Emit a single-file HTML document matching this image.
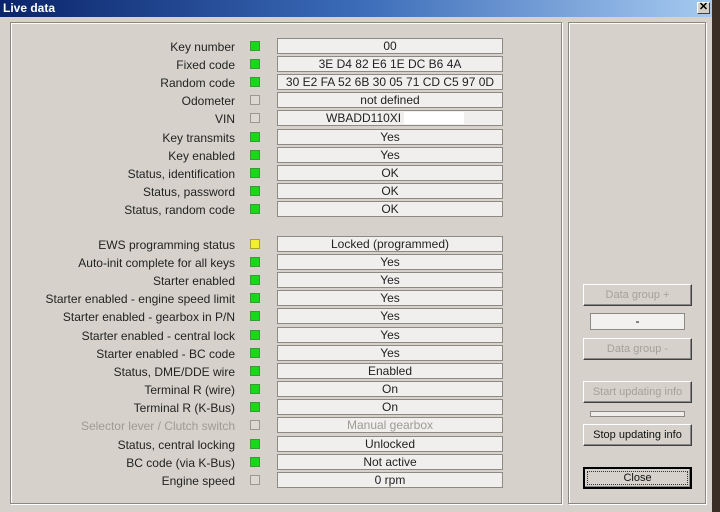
<!DOCTYPE html>
<html><head><meta charset="utf-8"><style>
*{margin:0;padding:0;box-sizing:border-box}
body{width:720px;height:512px;overflow:hidden;background:#3a2e26;font-family:"Liberation Sans",Arial,sans-serif;font-size:12px;position:relative}
#win{position:absolute;left:0;top:0;width:712px;height:512px;background:#d6d2cb}
#title{position:absolute;left:0;top:0;width:712px;height:17px;background:linear-gradient(90deg,#0a246a 0%,#3b6bb8 50%,#a6caf0 100%);color:#fff;font-weight:bold;font-size:12px;line-height:16px;padding-left:3px}
#x{position:absolute;left:697px;top:2px;width:13px;height:12px;background:#d4d0c8;border:1px solid;border-color:#fff #404040 #404040 #fff;font-size:11px;line-height:9px;text-align:center;color:#000;font-weight:bold}
.panel{position:absolute;border:1px solid #8a877f;box-shadow:inset 1px 1px 0 #fff,1px 1px 0 #fff}
.lbl{position:absolute;right:477px;width:240px;text-align:right;font-size:12px;color:#222;line-height:14px}
.ind{position:absolute;left:250px;width:10px;height:10px;border:1px solid #9a988f;background:#ddd9d2}
.g{background:#18d818;border-color:#3a9a3a}
.y{background:#f2ef30;border-color:#aaa030}
.val{position:absolute;left:277px;width:226px;height:16px;background:#f0efed;border:1px solid #8d8a84;text-align:center;font-size:12px;line-height:15px;color:#222}
.dis{color:#9e9b94}
.btn{position:absolute;left:583px;width:109px;height:22px;background:#d6d2cb;border:1px solid;border-color:#fff #404040 #404040 #fff;box-shadow:inset -1px -1px 0 #888;text-align:center;line-height:20px;font-size:11px;color:#111}
.btn.d{color:#a4a19a}
</style></head><body>
<div id="win">
<div id="title">Live data</div><div id="x">✕</div>
<div class="panel" style="left:10px;top:22px;width:552px;height:482px"></div>
<div class="panel" style="left:568px;top:22px;width:138px;height:482px"></div>

<div class="lbl" style="top:40px">Key number</div><div class="ind g" style="top:41px"></div><div class="val" style="top:38px">00</div>
<div class="lbl" style="top:58px">Fixed code</div><div class="ind g" style="top:59px"></div><div class="val" style="top:56px">3E D4 82 E6 1E DC B6 4A</div>
<div class="lbl" style="top:76px">Random code</div><div class="ind g" style="top:77px"></div><div class="val" style="top:74px">30 E2 FA 52 6B 30 05 71 CD C5 97 0D</div>
<div class="lbl" style="top:94px">Odometer</div><div class="ind" style="top:95px"></div><div class="val" style="top:92px">not defined</div>
<div class="lbl" style="top:112px">VIN</div><div class="ind" style="top:113px"></div><div class="val" style="top:110px;text-align:left;padding-left:48px">WBADD110XI<span style="display:inline-block;width:60px;height:12px;background:#fff;vertical-align:-2px;margin-left:3px"></span></div>
<div class="lbl" style="top:131px">Key transmits</div><div class="ind g" style="top:132px"></div><div class="val" style="top:129px">Yes</div>
<div class="lbl" style="top:149px">Key enabled</div><div class="ind g" style="top:150px"></div><div class="val" style="top:147px">Yes</div>
<div class="lbl" style="top:167px">Status, identification</div><div class="ind g" style="top:168px"></div><div class="val" style="top:165px">OK</div>
<div class="lbl" style="top:185px">Status, password</div><div class="ind g" style="top:186px"></div><div class="val" style="top:183px">OK</div>
<div class="lbl" style="top:203px">Status, random code</div><div class="ind g" style="top:204px"></div><div class="val" style="top:201px">OK</div>

<div class="lbl" style="top:238px">EWS programming status</div><div class="ind y" style="top:239px"></div><div class="val" style="top:236px">Locked (programmed)</div>
<div class="lbl" style="top:256px">Auto-init complete for all keys</div><div class="ind g" style="top:257px"></div><div class="val" style="top:254px">Yes</div>
<div class="lbl" style="top:274px">Starter enabled</div><div class="ind g" style="top:275px"></div><div class="val" style="top:272px">Yes</div>
<div class="lbl" style="top:292px">Starter enabled - engine speed limit</div><div class="ind g" style="top:293px"></div><div class="val" style="top:290px">Yes</div>
<div class="lbl" style="top:310px">Starter enabled - gearbox in P/N</div><div class="ind g" style="top:311px"></div><div class="val" style="top:308px">Yes</div>
<div class="lbl" style="top:329px">Starter enabled - central lock</div><div class="ind g" style="top:330px"></div><div class="val" style="top:327px">Yes</div>
<div class="lbl" style="top:347px">Starter enabled - BC code</div><div class="ind g" style="top:348px"></div><div class="val" style="top:345px">Yes</div>
<div class="lbl" style="top:365px">Status, DME/DDE wire</div><div class="ind g" style="top:366px"></div><div class="val" style="top:363px">Enabled</div>
<div class="lbl" style="top:383px">Terminal R (wire)</div><div class="ind g" style="top:384px"></div><div class="val" style="top:381px">On</div>
<div class="lbl" style="top:401px">Terminal R (K-Bus)</div><div class="ind g" style="top:402px"></div><div class="val" style="top:399px">On</div>
<div class="lbl dis" style="top:419px">Selector lever / Clutch switch</div><div class="ind" style="top:420px"></div><div class="val dis" style="top:417px">Manual gearbox</div>
<div class="lbl" style="top:438px">Status, central locking</div><div class="ind g" style="top:439px"></div><div class="val" style="top:436px">Unlocked</div>
<div class="lbl" style="top:456px">BC code (via K-Bus)</div><div class="ind g" style="top:457px"></div><div class="val" style="top:454px">Not active</div>
<div class="lbl" style="top:474px">Engine speed</div><div class="ind" style="top:475px"></div><div class="val" style="top:472px">0 rpm</div>

<div class="btn d" style="top:284px">Data group +</div>
<div style="position:absolute;left:590px;top:313px;width:95px;height:17px;background:#f2f1ef;border:1px solid #8d8a84;text-align:center;line-height:14px">-</div>
<div class="btn d" style="top:338px">Data group -</div>
<div class="btn d" style="top:381px">Start updating info</div>
<div style="position:absolute;left:590px;top:411px;width:95px;height:6px;background:#eeede9;border:1px solid #8d8a84"></div>
<div class="btn" style="top:424px">Stop updating info</div>
<div class="btn" style="top:467px;border:2px solid #000;outline:1px dotted #333;outline-offset:-5px;line-height:18px">Close</div>
</div>
</body></html>
